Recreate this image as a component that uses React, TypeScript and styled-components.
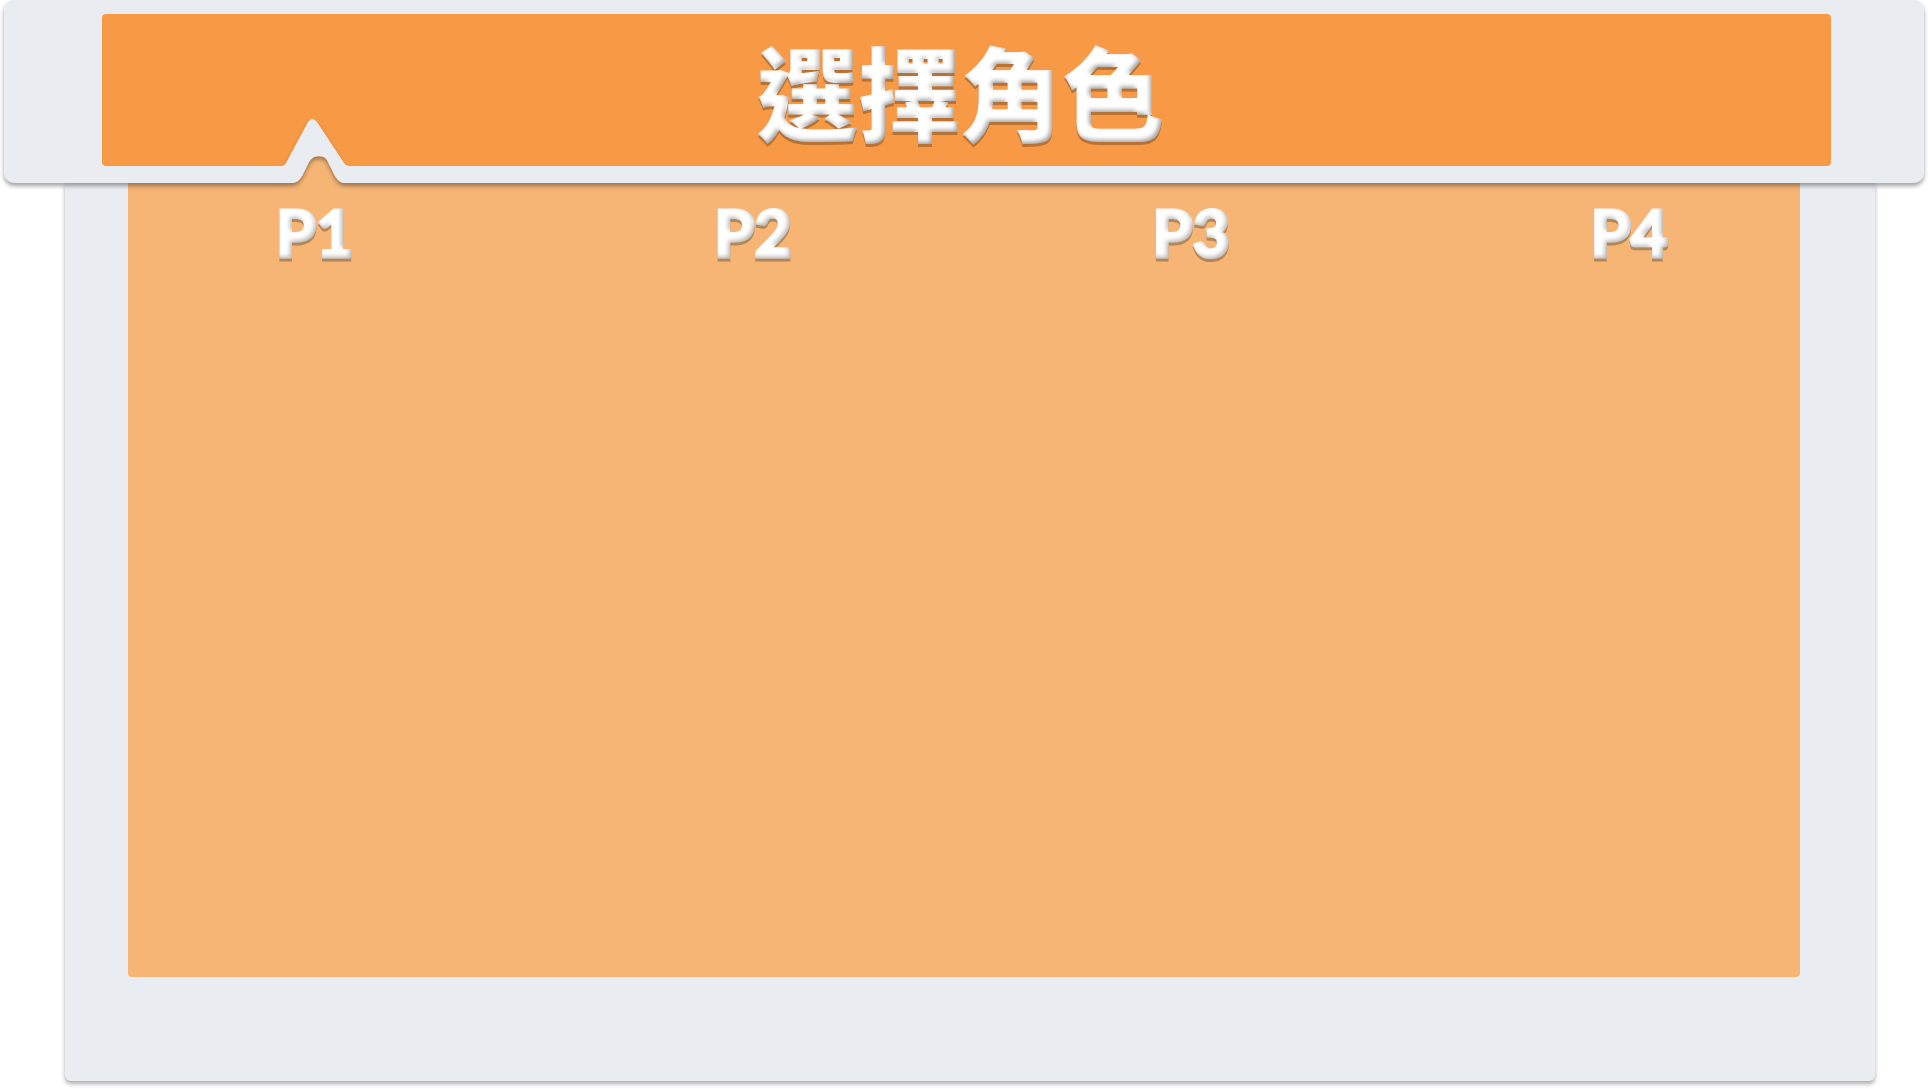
import React from "react";
import styled, { createGlobalStyle } from "styled-components";

const frame = "#e9edf2";
const peach = "#f6b575";
const orange = "#f89a45";

const GlobalStyle = createGlobalStyle`
  * { box-sizing: border-box; }
  body { margin: 0; background: #fff; }
`;

const Page = styled.div`
  min-height: 100vh;
  display: flex;
  flex-direction: column;
  padding: 0 4px 8px;
`;

const Header = styled.header`
  position: relative;
  z-index: 1;
  padding: 14px 93px 17px 98px;
  border-radius: 10px;
  background: ${frame};
  box-shadow: 0 3px 4px rgba(0, 0, 0, 0.36);
`;

const TitlePanel = styled.div`
  display: flex;
  justify-content: center;
  align-items: center;
  height: 152px;
  padding-right: 12px;
  border-radius: 4px;
  background: ${orange};
`;

const Title = styled.h1`
  margin: 0;
  color: #fff;
  font: 900 102px/120px "Noto Sans CJK TC", sans-serif;
  filter: url(#bevel-large);
`;

const Notch = styled.svg`
  position: absolute;
  left: 270px;
  bottom: -10px;
  width: 86px;
  height: 78px;
  overflow: hidden;
`;

const Board = styled.main`
  flex: 1;
  display: flex;
  margin: 0 49px 0 61px;
  padding: 0 75px 104px 63px;
  border-radius: 0 0 6px 6px;
  background: ${frame};
  box-shadow: 0 3px 4px rgba(0, 0, 0, 0.32);
`;

const Players = styled.ul`
  flex: 1;
  display: flex;
  justify-content: space-between;
  align-items: flex-start;
  margin: 0;
  padding: 16px 132px 0 148px;
  list-style: none;
  border-radius: 0 0 4px 4px;
  background: ${peach};
`;

const Player = styled.li`
  color: #fff;
  font: 900 64px/68px Lato, sans-serif;
  -webkit-text-stroke: 3px #fff;
  stroke-linejoin: round;
  filter: url(#bevel-small);
`;

const Defs = styled.svg`
  position: absolute;
  width: 0;
  height: 0;
`;

type BevelProps = { id: string; depth: number; drop: number; shade: number };

function Bevel({ id, depth, drop, shade }: BevelProps) {
  return (
    <filter id={id} x="-10%" y="-10%" width="120%" height="130%" colorInterpolationFilters="sRGB">
      <feGaussianBlur in="SourceAlpha" stdDeviation={depth} result="soft" />
      <feOffset in="soft" dx={-depth} dy={-depth} result="moved" />
      <feComposite in="SourceAlpha" in2="moved" operator="out" result="edge" />
      <feFlood floodColor="#000" floodOpacity={shade} />
      <feComposite in2="edge" operator="in" result="innerShade" />
      <feOffset in="SourceAlpha" dx="0" dy={drop} result="below" />
      <feFlood floodColor="#000" floodOpacity="0.26" />
      <feComposite in2="below" operator="in" result="dropShade" />
      <feMerge>
        <feMergeNode in="dropShade" />
        <feMergeNode in="SourceGraphic" />
        <feMergeNode in="innerShade" />
      </feMerge>
    </filter>
  );
}

const players = ["P1", "P2", "P3", "P4"];

export default function App() {
  return (
    <Page>
      <GlobalStyle />
      <Defs aria-hidden="true">
        <Bevel id="bevel-large" depth={2} drop={3} shade={0.36} />
        <Bevel id="bevel-small" depth={2} drop={3} shade={0.28} />
      </Defs>
      <Header>
        <TitlePanel>
          <Title>選擇角色</Title>
        </TitlePanel>
        <Notch viewBox="0 0 86 78" aria-hidden="true">
          <defs>
            <filter id="ribbon" x="-20%" y="-20%" width="140%" height="150%">
              <feDropShadow dx="0" dy="3" stdDeviation="2" floodColor="#000" floodOpacity="0.36" />
            </filter>
          </defs>
          <path d="M20 68 L32 40 H54 L70 68 H86 V78 H0 V68Z" fill={peach} />
          <path
            filter="url(#ribbon)"
            fill={frame}
            d="M-20 51 H8 Q10 51 12 48 L34 7 Q38 1 43 7 L70 48 Q72 51 75 51 H106 V68 H70 Q65 68 61 61 L54 47 Q52 41 45 41 Q38 41 35 47 L28 61 Q24 68 18 68 H-20Z"
          />
        </Notch>
      </Header>
      <Board>
        <Players>
          {players.map((name) => (
            <Player key={name}>{name}</Player>
          ))}
        </Players>
      </Board>
    </Page>
  );
}
